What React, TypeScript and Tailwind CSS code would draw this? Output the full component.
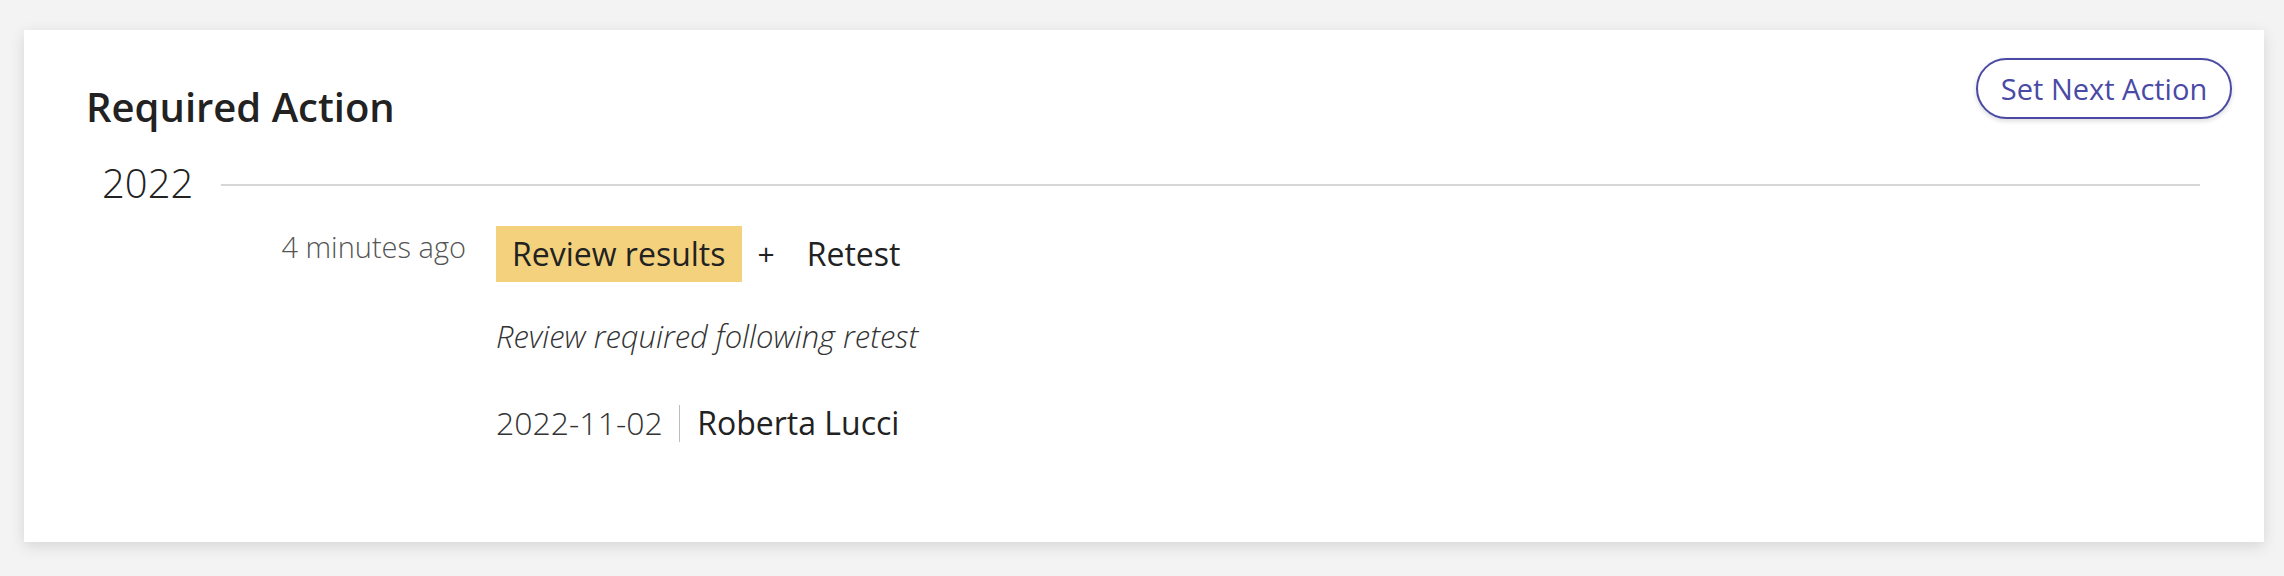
const ActionTag = ({ label, highlight }: { label: string; highlight?: boolean }) => (
  <span
    className={
      highlight
        ? "h-[56px] bg-[#f4d27d] px-[16px] text-[32px] leading-[56px] text-[#222]"
        : "h-[56px] px-[16px] text-[32px] leading-[56px] text-[#222]"
    }
  >
    {label}
  </span>
);

export default function App() {
  return (
    <div className="min-h-[576px] bg-[#f3f3f3] pt-[30px] font-['Open_Sans',sans-serif]">
      <div className="ml-[24px] flex h-[512px] w-[2240px] flex-col bg-white px-[32px] pt-[28px] shadow-[0_4px_14px_rgba(0,0,0,0.12)]">
        {/* Header */}
        <div className="flex items-start justify-between">
          <h2 className="ml-[30px] mt-[24.5px] text-[40px] font-semibold leading-[48px] text-[#222]">
            Required Action
          </h2>
          <button className="flex h-[61px] w-[256px] items-center justify-center rounded-full border-2 border-[#4a4aa6] bg-white text-[29px] text-[#4a4aa6] shadow-[0_2px_5px_rgba(0,0,0,0.15)]">
            Set Next Action
          </button>
        </div>

        {/* Year divider */}
        <div className="ml-[46px] mr-[32px] mt-[28px] flex items-start">
          <span className="text-[40px] font-light leading-[48px] text-[#222]">2022</span>
          <div className="ml-[28px] mt-[25.5px] h-[2px] flex-1 bg-[#d6d6d6]" />
        </div>

        {/* Entry */}
        <div className="mt-[19.5px] flex items-start">
          <div className="w-[410px] text-right text-[29px] font-light leading-[42px] text-[#555]">
            4 minutes ago
          </div>
          <div className="ml-[30px] flex flex-col">
            <div className="flex items-center">
              <ActionTag label="Review results" highlight />
              <span className="mx-[16px] text-[30px] leading-[56px] text-[#222]">+</span>
              <ActionTag label="Retest" />
            </div>
            <p className="mt-[32px] text-[31px] font-light italic leading-[44px] text-[#333]">
              Review required following retest
            </p>
            <div className="mt-[41px] flex items-center">
              <span className="text-[32px] font-light leading-[48px] text-[#333]">2022-11-02</span>
              <span className="ml-[16px] mr-[17px] h-[37px] w-[1.5px] bg-[#bdbdbd]" />
              <span className="text-[32px] leading-[48px] text-[#222]">Roberta Lucci</span>
            </div>
          </div>
        </div>
      </div>
    </div>
  );
}
